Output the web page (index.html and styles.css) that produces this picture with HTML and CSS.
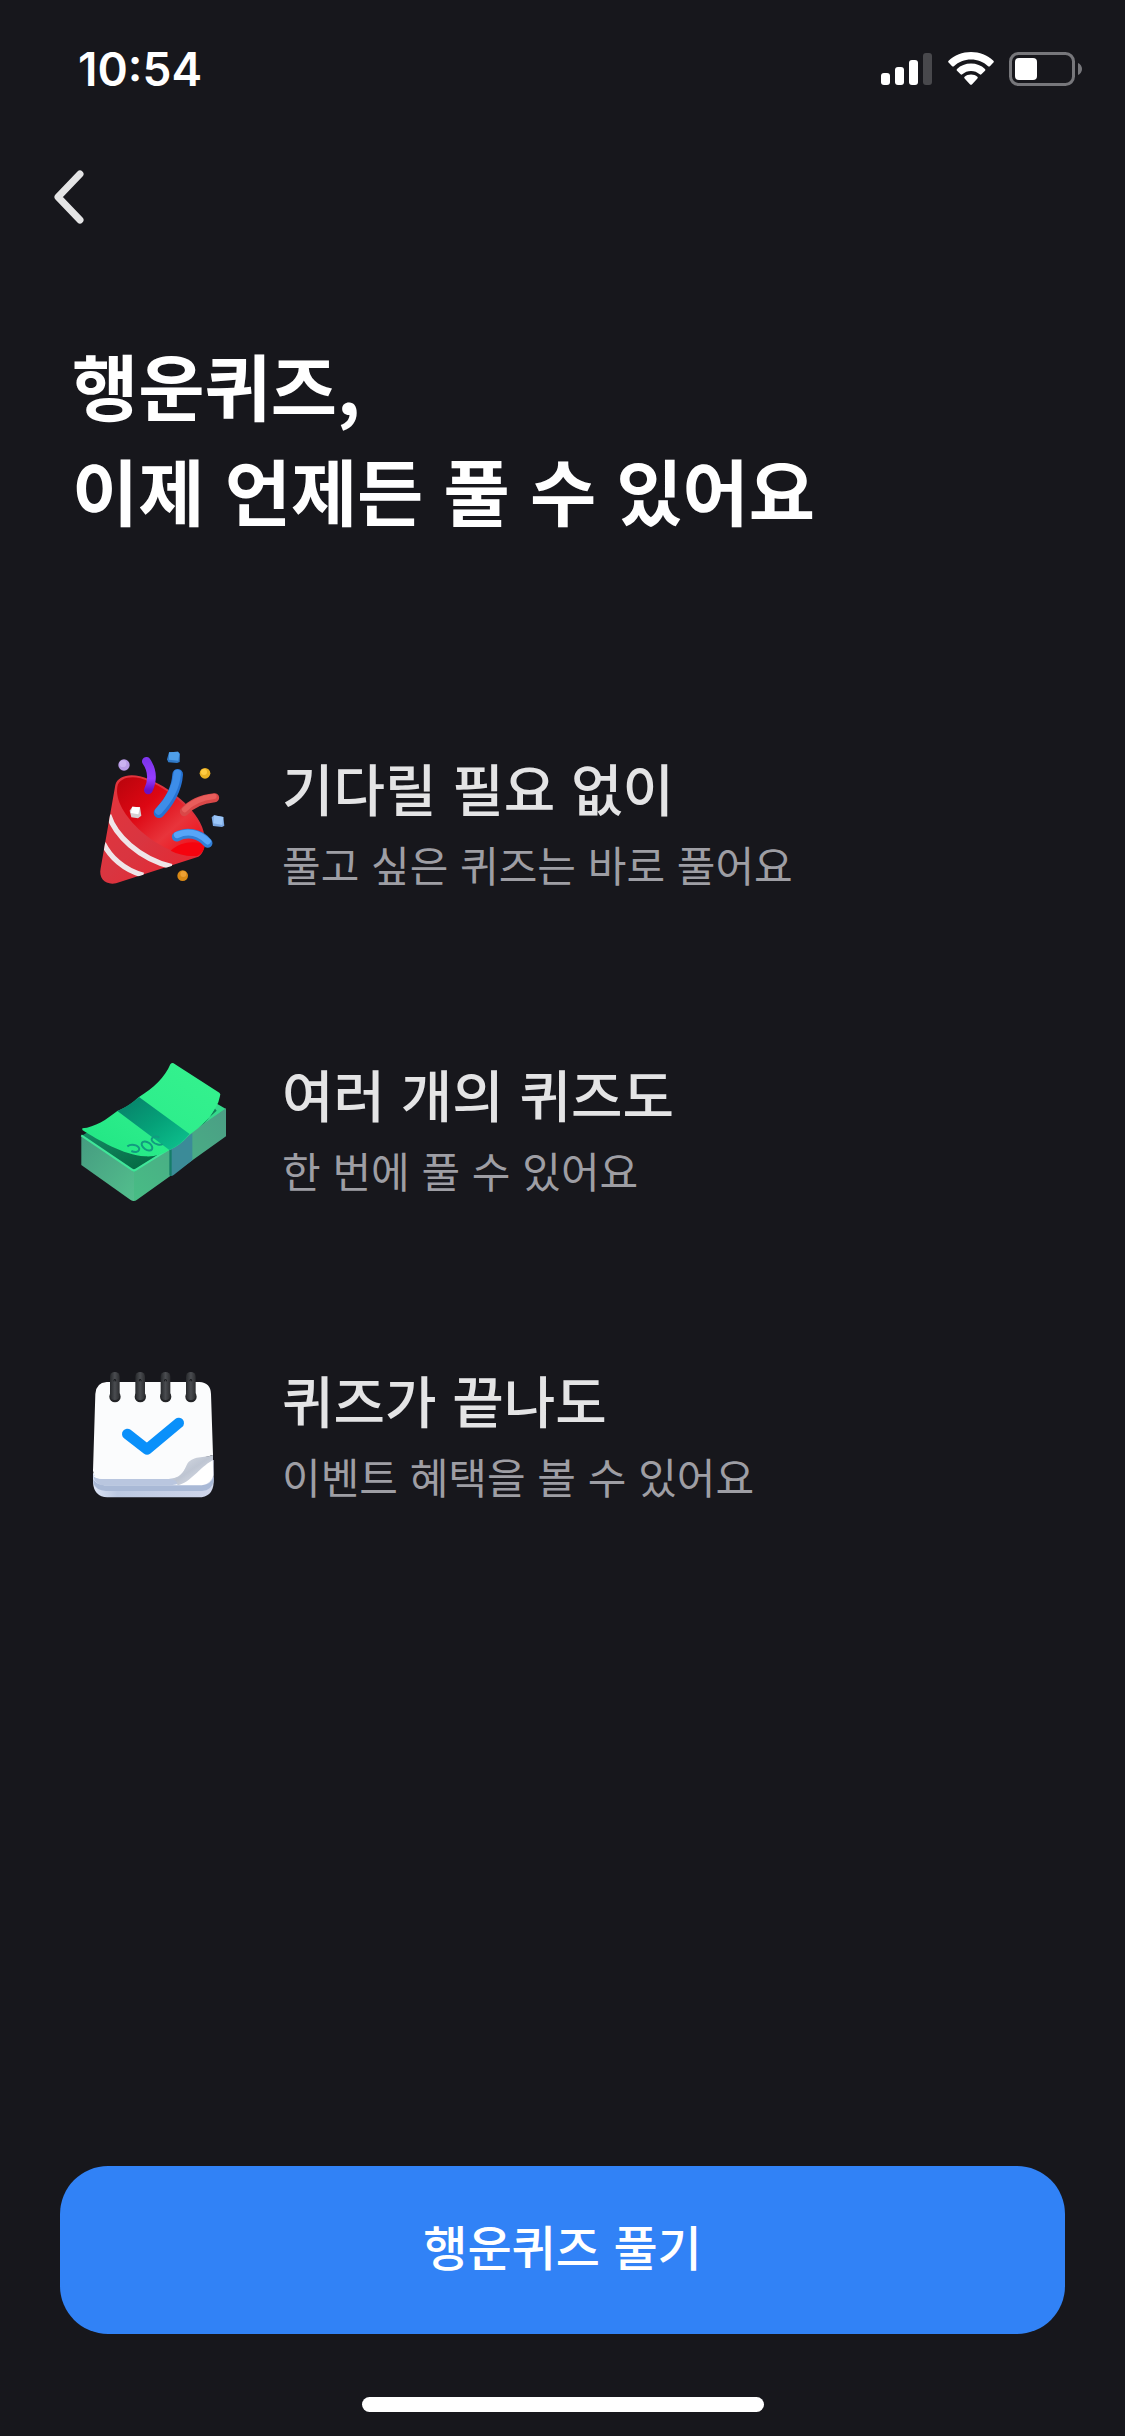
FILE: index.html
```html
<!DOCTYPE html>
<html lang="ko">
<head>
    <meta charset="UTF-8">
    <meta name="viewport" content="width=device-width, initial-scale=1.0">
    <title>행운퀴즈</title>
    <link rel="stylesheet" href="styles.css">
</head>
<body>
    <div class="status-bar">
        <span class="time">10:54</span>
        <div class="status-icons">
            <svg width="52" height="34" viewBox="0 0 52 34" fill="#fff">
                <rect x="0" y="21" width="9" height="12" rx="3"/>
                <rect x="14" y="15" width="9" height="18" rx="3"/>
                <rect x="28" y="8" width="9" height="25" rx="3"/>
                <rect x="42" y="1" width="9" height="32" rx="3" fill="#48484c"/>
            </svg>
            <svg width="46" height="34" viewBox="0 0 46 34" fill="#fff">
                <path d="M23 0C14.500 0 6.500 3.300 .6 8.800q-.9.900 0 1.800l3.500 3.600q.9.800 1.800 0C10.500 9.900 16.500 7.500 23 7.500s12.500 2.400 17.100 6.700q.9.800 1.800 0l3.500-3.600q.9-.9 0-1.800C39.500 3.300 31.500 0 23 0z"/>
                <path d="M23 11.500c-5.400 0-10.300 2-14 5.400q-.9.900 0 1.800l3.600 3.600q.8.700 1.700 0C16.700 20.200 19.700 19 23 19s6.300 1.200 8.700 3.300q.9.700 1.700 0l3.600-3.600q.9-.9 0-1.800c-3.700-3.400-8.600-5.400-14-5.400z"/>
                <path d="M23 22.500c-2.500 0-4.700.9-6.400 2.300q-.9.800 0 1.700l5.500 5.900q.9.900 1.800 0l5.500-5.900q.9-.9 0-1.700c-1.700-1.400-3.900-2.300-6.400-2.300z"/>
            </svg>
            <svg width="74" height="34" viewBox="0 0 74 34">
                <rect x="1.500" y="1.500" width="63" height="31" rx="8" fill="none" stroke="#77777b" stroke-width="3"/>
                <rect x="6" y="6" width="22" height="22" rx="4" fill="#fff"/>
                <path d="M69 11v12c2.600-1.200 4-3.500 4-6s-1.400-4.800-4-6z" fill="#77777b"/>
            </svg>
        </div>
    </div>

    <nav class="nav">
        <button class="back" type="button" aria-label="뒤로">
            <svg width="34" height="56" viewBox="0 0 34 56" fill="none" stroke="#e4e4e5" stroke-width="7" stroke-linecap="round" stroke-linejoin="round">
                <path d="M28 5L6 28l22 23"/>
            </svg>
        </button>
    </nav>

    <main class="content">
        <h1>행운퀴즈,<br>이제 언제든 풀 수 있어요</h1>

        <ul class="benefits">
            <li class="benefit">
                <!-- party popper -->
                <svg class="benefit-icon" viewBox="-18 48 480 480">
                    <defs>
                        <linearGradient id="cone" x1="0" y1="0" x2="1" y2="1">
                            <stop offset="0" stop-color="#e5353c"/>
                            <stop offset=".5" stop-color="#d93540"/>
                            <stop offset="1" stop-color="#e8242e"/>
                        </linearGradient>
                        <linearGradient id="inside" x1="0" y1="0" x2="1" y2="1">
                            <stop offset="0" stop-color="#b8040c"/>
                            <stop offset=".35" stop-color="#dd0713"/>
                            <stop offset=".65" stop-color="#e8343b"/>
                            <stop offset="1" stop-color="#f2040f"/>
                        </linearGradient>
                        <linearGradient id="purple" x1="0" y1="0" x2="0" y2="1">
                            <stop offset="0" stop-color="#7f35ee"/>
                            <stop offset=".6" stop-color="#963cff"/>
                            <stop offset="1" stop-color="#6c10c4"/>
                        </linearGradient>
                        <clipPath id="cone-clip">
                            <path d="M106 165L62 415C55 447 78 466 108 460L350 385Q378 375 372 350L240 340L130 220z"/>
                        </clipPath>
                    </defs>
                    <path d="M106 165C112 140 145 130 180 139C250 158 340 225 366 290C378 320 380 365 355 380L108 460C78 466 55 447 62 415z" fill="url(#cone)"/>
                    <g clip-path="url(#cone-clip)" fill="none" stroke="#efe5e8" stroke-width="16">
                        <path d="M86 255C105 315 175 385 275 410"/>
                        <path d="M70 340C90 380 130 420 190 436"/>
                    </g>
                    <path d="M112 170C116 145 150 136 182 145C250 165 335 230 360 292C375 330 375 365 352 377C310 382 235 350 185 305C135 260 105 210 112 170z" fill="url(#inside)"/>
                    <path d="M272 362C300 335 345 330 374 344Q374 366 352 377C325 380 295 374 272 362z" fill="#f5030e"/>
                    <g fill="none" stroke-linecap="round">
                        <path d="M199 94C217 120 219 150 205 180" stroke="url(#purple)" stroke-width="26"/>
                        <path d="M293 133C290 178 265 220 237 248" stroke="#2673d3" stroke-width="32"/>
                        <path d="M292 130C289 172 266 211 236 243" stroke="#3d8de8" stroke-width="22"/>
                        <path d="M313 245C332 222 365 207 404 203" stroke="#d94848" stroke-width="27"/>
                        <path d="M314 239C334 218 366 203 402 199" stroke="#e85d5b" stroke-width="16"/>
                        <path d="M290 320C320 304 358 309 383 339" stroke="#327fd7" stroke-width="29"/>
                        <path d="M291 315C322 301 356 307 383 334" stroke="#57a5f8" stroke-width="19"/>
                    </g>
                    <circle cx="132" cy="105" r="17" fill="#b99be6"/>
                    <circle cx="129" cy="101" r="10" fill="#cbb2f1"/>
                    <circle cx="375" cy="130" r="16" fill="#e9b023"/>
                    <circle cx="372" cy="126" r="9" fill="#ffcb42"/>
                    <circle cx="308" cy="437" r="16" fill="#d98916"/>
                    <circle cx="310" cy="432" r="9" fill="#eda032"/>
                    <path d="M267 67l27-2 6 7-1 24-8 3-26-2-4-9z" fill="#3079c7"/>
                    <path d="M267 67l27-2 4 6-3 21-28-3z" fill="#4f9fe9"/>
                    <path d="M402 256l28 5 3 26-7 4-27-3-4-26z" fill="#7ba7e2"/>
                    <path d="M402 256l28 5-3 24-27-5z" fill="#9bc6f8"/>
                    <path d="M157 230l23 2 4 25-10 8-20-3-5-20z" fill="#d5cfd2"/>
                    <path d="M157 230l23 2-5 21-23-4z" fill="#fff"/>
                </svg>
                <div class="benefit-text">
                    <h2>기다릴 필요 없이</h2>
                    <p>풀고 싶은 퀴즈는 바로 풀어요</p>
                </div>
            </li>
            <li class="benefit">
                <!-- bundle of notes -->
                <svg class="benefit-icon" viewBox="42 36 480 480">
                    <defs>
                        <linearGradient id="note" x1="0" y1="1" x2="1" y2="0">
                            <stop offset="0" stop-color="#20e583"/>
                            <stop offset=".5" stop-color="#2eee8c"/>
                            <stop offset="1" stop-color="#36f28e"/>
                        </linearGradient>
                        <linearGradient id="left-side" x1="0" y1="0" x2="1" y2="1">
                            <stop offset="0" stop-color="#459b80"/>
                            <stop offset="1" stop-color="#53bf8d"/>
                        </linearGradient>
                        <linearGradient id="right-side" x1="0" y1="1" x2="1" y2="0">
                            <stop offset="0" stop-color="#48bd85"/>
                            <stop offset="1" stop-color="#4b9e85"/>
                        </linearGradient>
                        <linearGradient id="band" x1="0" y1="0" x2="1" y2="1">
                            <stop offset="0" stop-color="#087d68"/>
                            <stop offset=".5" stop-color="#05a078"/>
                            <stop offset="1" stop-color="#0ec590"/>
                        </linearGradient>
                        <linearGradient id="shade" x1="0" y1="0" x2="1" y2="1">
                            <stop offset="0" stop-color="#148c65"/>
                            <stop offset="1" stop-color="#02643d"/>
                        </linearGradient>
                    </defs>
                    <path d="M64 288L330 200L472 192L498 207L222 400z" fill="#35d98b"/>
                    <path d="M64 288L80 278L320 335L222 392z" fill="url(#shade)"/>
                    <path d="M385 290Q445 250 464 205L470 212L400 275z" fill="#128259"/>
                    <path d="M64 286L222 396V483Q218 484 212 480L64 375z" fill="url(#left-side)"/>
                    <path d="M222 396L498 205V289L230 480Q226 483 222 483z" fill="url(#right-side)"/>
                    <path d="M64 286L216 389Q222 393 229 388L330 325" fill="none" stroke="#40e699" stroke-width="6"/>
                    <path d="M330 326L397 280V361L341 405Q334 410 330 407z" fill="#3b8b98"/>
                    <path d="M328 329h7v78q-4 2-7-1z" fill="#157d68"/>
                    <path d="M67 265C105 262 140 238 172 213C198 204 218 188 237 171C280 145 315 112 331 73Q337 66 344 72L478 158Q483 162 480 168L475 187C455 230 425 260 388 284Q362 315 328 330C305 345 280 351 255 349C190 345 115 300 67 270z" fill="url(#note)"/>
                    <path d="M172 213Q207 198 237 171L389 282Q362 315 328 330z" fill="url(#band)"/>
                    <g fill="none" stroke="#129b80" stroke-width="6">
                        <path d="M202 319C218 307 242 320 237 330C235 337 224 338 214 333"/>
                        <ellipse cx="261" cy="318" rx="18" ry="11" transform="rotate(35 261 318)"/>
                        <path d="M298 293C284 285 268 295 278 305C286 314 301 317 308 312"/>
                    </g>
                </svg>
                <div class="benefit-text">
                    <h2>여러 개의 퀴즈도</h2>
                    <p>한 번에 풀 수 있어요</p>
                </div>
            </li>
            <li class="benefit">
                <!-- calendar with a check -->
                <svg class="benefit-icon" viewBox="12 24 480 480">
                    <defs>
                        <linearGradient id="pages" x1="0" y1="0" x2="1" y2="0">
                            <stop offset="0" stop-color="#dce4f5"/>
                            <stop offset=".2" stop-color="#bcc9e2"/>
                            <stop offset="1" stop-color="#d0d6ea"/>
                        </linearGradient>
                        <linearGradient id="curl" x1="0" y1="0" x2="1" y2="1">
                            <stop offset="0" stop-color="#dfe3ea"/>
                            <stop offset=".5" stop-color="#bec5d2"/>
                            <stop offset="1" stop-color="#e8ebf2"/>
                        </linearGradient>
                        <linearGradient id="ring" x1="0" y1="0" x2="1" y2="0">
                            <stop offset="0" stop-color="#26282b"/>
                            <stop offset=".5" stop-color="#4a4c50"/>
                            <stop offset="1" stop-color="#2c2d30"/>
                        </linearGradient>
                    </defs>
                    <path d="M69 370L431 330V398Q428 442 385 442H112Q72 440 69 398z" fill="url(#pages)"/>
                    <path d="M70 388Q80 405 102 405H398Q424 402 431 380V394Q425 422 396 423H108Q78 422 70 400z" fill="#a9b9d6"/>
                    <path d="M70 378Q78 397 102 406H396Q423 402 430 376L428 320L330 400z" fill="#fff"/>
                    <path d="M69 374Q72 387 102 387H296L340 380L335 396Q320 406 296 406H102Q72 404 69 374z" fill="#b9c6df"/>
                    <path d="M110 96H388Q422 98 423 132L429 315C395 325 355 330 342 364Q328 387 296 387H102Q70 387 69 362L76 132Q78 98 110 96z" fill="#fbfcfd"/>
                    <path d="M429 315C405 325 365 315 350 345C342 365 330 386 296 387Q324 388 322 406C362 398 385 355 429 330z" fill="url(#curl)"/>
                    <g fill="#232427">
                        <circle cx="135" cy="140" r="17"/>
                        <circle cx="211" cy="140" r="17"/>
                        <circle cx="287" cy="140" r="17"/>
                        <circle cx="363" cy="140" r="17"/>
                    </g>
                    <g fill="url(#ring)">
                        <rect x="120" y="66" width="29" height="84" rx="14"/>
                        <rect x="196" y="66" width="29" height="84" rx="14"/>
                        <rect x="272" y="66" width="29" height="84" rx="14"/>
                        <rect x="348" y="66" width="29" height="84" rx="14"/>
                    </g>
                    <g fill="none" stroke="#17181b" stroke-width="3">
                        <path d="M132 94v-4q2-6 5 0v4M208 94v-4q2-6 5 0v4M284 94v-4q2-6 5 0v4M360 94v-4q2-6 5 0v4"/>
                    </g>
                    <path d="M172 252L231 298L326 219" fill="none" stroke="#0a90fa" stroke-width="32" stroke-linecap="round" stroke-linejoin="round"/>
                </svg>
                <div class="benefit-text">
                    <h2>퀴즈가 끝나도</h2>
                    <p>이벤트 혜택을 볼 수 있어요</p>
                </div>
            </li>
        </ul>
    </main>

    <footer class="footer">
        <button class="start" type="button">행운퀴즈 풀기</button>
        <div class="home-indicator"></div>
    </footer>
</body>
</html>
```
FILE: styles.css
```css
* {
    box-sizing: border-box;
}
body {
    margin: 0;
    min-height: 100vh;
    display: flex;
    flex-direction: column;
    background-color: #17171c;
    color: #fff;
    font-family: "Noto Sans CJK KR", sans-serif;
}
h1, h2, p, ul {
    margin: 0;
    padding: 0;
}
button {
    border: none;
    cursor: pointer;
    font-family: inherit;
}
svg {
    display: block;
}
.status-bar {
    display: flex;
    justify-content: space-between;
    align-items: center;
    height: 138px;
    padding: 0 42px 0 78px;
}
.time {
    font-family: Inter, sans-serif;
    font-size: 46px;
    font-weight: 600;
}
.status-icons {
    display: flex;
    gap: 15px;
}
.nav {
    display: flex;
    align-items: center;
    height: 118px;
    padding: 0 52px;
}
.back {
    padding: 0;
    background: none;
}
.content {
    padding: 75px 72px 0;
}
h1 {
    font-size: 72px;
    font-weight: 700;
    line-height: 105px;
}
.benefits {
    display: flex;
    flex-direction: column;
    gap: 146px;
    margin-top: 205px;
    padding-left: 2px;
    list-style: none;
}
.benefit {
    display: flex;
    align-items: center;
    gap: 48px;
}
.benefit-icon {
    flex: none;
    width: 160px;
    height: 160px;
}
.benefit-text {
    padding-bottom: 6px;
}
h2 {
    color: #e4e4e5;
    font-size: 56px;
    font-weight: 500;
    line-height: 82px;
}
.benefit-text p {
    color: #9e9ea4;
    font-size: 42px;
    line-height: 72px;
}
.footer {
    display: flex;
    flex-direction: column;
    align-items: center;
    gap: 63px;
    margin-top: auto;
    padding: 0 60px 24px;
}
.start {
    width: 100%;
    height: 168px;
    padding: 0 0 10px;
    border-radius: 48px;
    background-color: #3182f6;
    color: #fff;
    font-size: 48px;
    font-weight: 500;
}
.home-indicator {
    width: 40%;
    max-width: 402px;
    height: 15px;
    border-radius: 8px;
    background-color: #fff;
}
```
